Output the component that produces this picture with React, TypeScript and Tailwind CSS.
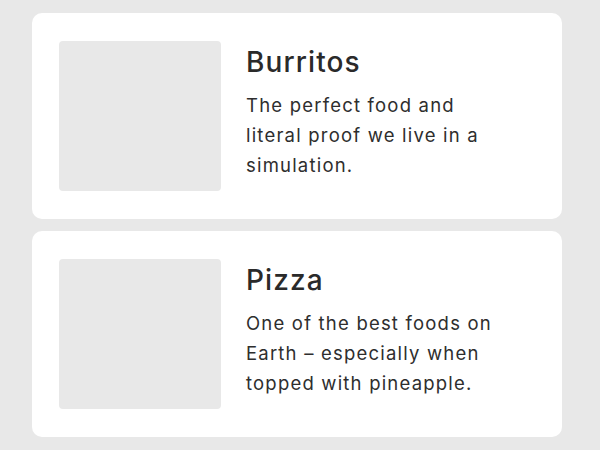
export default function App() {
  const items = [
    { title: "Burritos", lines: ["The perfect food and", "literal proof we live in a", "simulation."] },
    { title: "Pizza", lines: ["One of the best foods on", "Earth – especially when", "topped with pineapple."] },
  ];
  return (
    <div className="min-h-[450px] w-[600px] bg-[#e8e8e8] pt-[13px] font-['Inter',sans-serif] text-[#262626]">
      <div className="ml-[32px] flex w-[530px] flex-col gap-[12px]">
        {items.map((it) => (
          <div key={it.title} className="flex h-[206px] items-start gap-[25px] rounded-[10px] bg-white px-[27px] py-[28px]">
            <div className="h-[150px] w-[162px] shrink-0 rounded-[4px] bg-[#e8e8e8]" />
            <div className="flex flex-col pt-[3px]">
              <h2 className="text-[28px] leading-[36px] font-medium tracking-[1.1px] text-[#2a2a2a]">{it.title}</h2>
              <p className="mt-[10px] text-[18.5px] leading-[30px] font-normal tracking-[1.2px] text-[#2e2e2e]">
                {it.lines.map((l, i) => (
                  <span key={i} className="block whitespace-nowrap">{l}</span>
                ))}
              </p>
            </div>
          </div>
        ))}
      </div>
    </div>
  );
}
